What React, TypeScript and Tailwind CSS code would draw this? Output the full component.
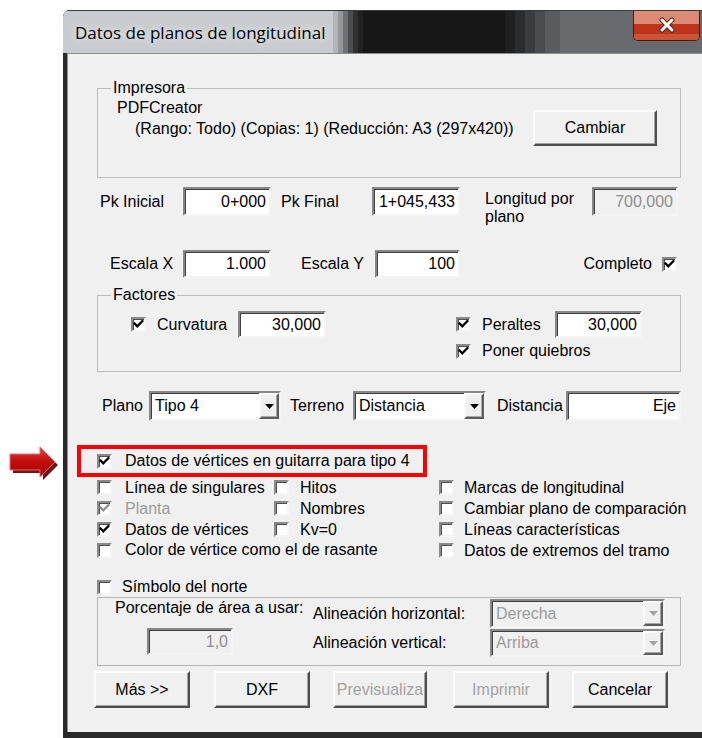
import React from "react";

type P = { children?: React.ReactNode; className?: string };

function CheckMark({ disabled }: { disabled?: boolean }) {
  return (
    <svg width="11" height="11" viewBox="0 0 11 11" className="block">
      <path
        d="M1.6 4.6 L4.3 7.4 L9.4 2.1"
        fill="none"
        stroke={disabled ? "#8f8f8f" : "#000"}
        strokeWidth="2.3"
        strokeLinecap="square"
      />
    </svg>
  );
}

function Box({ checked, disabled }: { checked?: boolean; disabled?: boolean }) {
  return (
    <span className="box-border flex h-[15px] w-[15px] shrink-0 items-center justify-center border-2 border-t-[#8a8a8a] border-l-[#8a8a8a] border-r-[#f5f5f5] border-b-[#f5f5f5] bg-white shadow-[inset_1px_1px_0_#505050]">
      {checked ? <CheckMark disabled={disabled} /> : null}
    </span>
  );
}

function Field({
  value,
  className = "",
  disabled,
}: {
  value: string;
  className?: string;
  disabled?: boolean;
}) {
  return (
    <div
      className={`box-border flex shrink-0 items-center justify-end border-2 border-t-[#878787] border-l-[#878787] border-r-[#f4f4f4] border-b-[#f4f4f4] pr-[3px] shadow-[inset_1px_1px_0_#404040] ${
        disabled ? "bg-[#f0f0f0] text-[#8d8d8d]" : "bg-white"
      } ${className}`}
    >
      {value}
    </div>
  );
}

function Select({
  value,
  className = "",
  disabled,
}: {
  value: string;
  className?: string;
  disabled?: boolean;
}) {
  return (
    <div
      className={`box-border flex shrink-0 border-2 border-t-[#878787] border-l-[#878787] border-r-[#f4f4f4] border-b-[#f4f4f4] shadow-[inset_1px_1px_0_#404040] ${
        disabled ? "bg-[#f0f0f0] text-[#9b9b9b]" : "bg-white"
      } ${className}`}
    >
      <span className="flex flex-1 items-center pl-[4px]">{value}</span>
      <span className="box-border flex w-[20px] items-center justify-center border-2 border-t-[#fafafa] border-l-[#fafafa] border-r-[#5c5c5c] border-b-[#5c5c5c] bg-[#f0f0f0] shadow-[inset_-1px_-1px_0_#a8a8a8]">
        <svg width="9" height="5" viewBox="0 0 9 5" className="block">
          <path d="M0 0 H9 L4.5 5 Z" fill={disabled ? "#a3a3a3" : "#000"} />
        </svg>
      </span>
    </div>
  );
}

function Button({ children, className = "", disabled }: P & { disabled?: boolean }) {
  return (
    <div
      className={`box-border flex shrink-0 items-center justify-center border-2 border-t-[#fcfcfc] border-l-[#fcfcfc] border-r-[#4e4e4e] border-b-[#4e4e4e] bg-[#f0f0f0] shadow-[inset_-1px_-1px_0_#a3a3a3] ${
        disabled ? "text-[#a3a3a3]" : "text-black"
      } ${className}`}
    >
      {children}
    </div>
  );
}

function Option({
  label,
  checked,
  disabled,
  gap,
}: {
  label: string;
  checked?: boolean;
  disabled?: boolean;
  gap: string;
}) {
  return (
    <div className="flex items-center">
      <Box checked={checked} disabled={disabled} />
      <span className={`${gap} whitespace-nowrap ${disabled ? "text-[#9c9c9c]" : ""}`}>{label}</span>
    </div>
  );
}

function Arrow() {
  return (
    <svg
      width="52"
      height="38"
      viewBox="0 0 52 38"
      className="absolute left-[7px] top-[445px]"
    >
      <defs>
        <linearGradient id="arrowFill" x1="0" y1="0" x2="0" y2="1">
          <stop offset="0" stopColor="#e04848" />
          <stop offset="0.45" stopColor="#c40d0d" />
          <stop offset="1" stopColor="#a80000" />
        </linearGradient>
      </defs>
      <path d="M6 12 H36 V5 L51 20 L36 35 V28 H6 Z" fill="#6d1616" />
      <path
        d="M3 9 H33 V2 L48 17 L33 32 V25 H3 Z"
        fill="url(#arrowFill)"
        stroke="#e86a6a"
        strokeWidth="1"
      />
    </svg>
  );
}

function CloseButton() {
  return (
    <div className="ml-auto mr-[6px] box-border flex h-[30px] w-[67px] shrink-0 flex-col overflow-hidden rounded-b-[5px] border border-t-0 border-[#4a1a12] shadow-[inset_0_0_0_1px_rgba(255,215,200,0.45)]">
      <div className="h-[13px] bg-[#dc8a74]" />
      <div className="h-[10px] bg-[#c0341b]" />
      <div className="flex-1 bg-[#cb5434]" />
      <svg
        width="18"
        height="16"
        viewBox="0 0 18 16"
        className="absolute ml-[24px] mt-[6px] block"
      >
        <path d="M4 3 L14 13 M14 3 L4 13" stroke="#5a2418" strokeWidth="5" strokeLinecap="round" />
        <path d="M4 3 L14 13 M14 3 L4 13" stroke="#ffffff" strokeWidth="3" strokeLinecap="round" />
      </svg>
    </div>
  );
}

function Caption() {
  return (
    <div className="flex h-[43px] shrink-0 border-t border-[#3a3a3a] bg-[#6f7275]">
      <div className="h-[42px] w-[270px] shrink-0 bg-[#c8cccf] pl-[12px] pt-[11px]">
        <span className="whitespace-nowrap font-['Open_Sans',sans-serif] text-[17px] leading-[22px] text-black [text-shadow:0_0_8px_#fff]">
          Datos de planos de longitudinal
        </span>
      </div>
      <div className="h-[42px] w-[5px] shrink-0 bg-[#b3b6b9]" />
      <div className="h-[42px] w-[5px] shrink-0 bg-[#95989b]" />
      <div className="h-[42px] w-[5px] shrink-0 bg-[#6f7174]" />
      <div className="h-[42px] w-[5px] shrink-0 bg-[#4b4d4f]" />
      <div className="h-[42px] w-[5px] shrink-0 bg-[#303132]" />
      <div className="h-[42px] w-[5px] shrink-0 bg-[#212122]" />
      <div className="h-[42px] w-[142px] shrink-0 bg-[#171717]" />
      <div className="h-[42px] w-[10px] shrink-0 bg-[#1f2021]" />
      <div className="h-[42px] w-[10px] shrink-0 bg-[#2b2c2d]" />
      <div className="h-[42px] w-[10px] shrink-0 bg-[#3a3c3e]" />
      <div className="h-[42px] w-[10px] shrink-0 bg-[#4a4c4f]" />
      <div className="h-[42px] w-[15px] shrink-0 bg-[#595c5f]" />
      <div className="relative flex h-[42px] flex-1 items-start bg-[#686b6e]">
        <CloseButton />
      </div>
    </div>
  );
}

export default function App() {
  return (
    <div className="relative h-[738px] w-[702px] overflow-hidden bg-white font-['Liberation_Sans',Arial,sans-serif] text-[16px] leading-[20px] text-black">
      <Arrow />

      {/* window frame */}
      <div className="ml-[63px] mt-[10px] flex h-[728px] w-[643px] flex-col overflow-hidden rounded-tl-[7px] bg-[#2a2a2a]">
        <Caption />

        {/* client area */}
        <div className="ml-[4px] flex h-[679px] shrink-0 flex-col border-l border-t border-[#8e8e8e] bg-[#f0f0f0]">
          {/* printer */}
          <fieldset className="ml-[29px] mt-[26px] h-[98px] w-[584px] border border-[#bdbdbd]">
            <legend className="ml-[13px] px-[2px] leading-[16px]">Impresora</legend>
            <div className="mt-px flex">
              <div className="flex-1 pl-[19px] leading-[21px]">
                <div>PDFCreator</div>
                <div className="pl-[18px] whitespace-nowrap">
                  (Rango: Todo) (Copias: 1) (Reducción: A3 (297x420))
                </div>
              </div>
              <Button className="mr-[23px] mt-[13px] h-[36px] w-[124px]">Cambiar</Button>
            </div>
          </fieldset>

          {/* chainage row */}
          <div className="ml-[29px] mt-[9px] flex h-[29px] items-start">
            <span className="flex h-[29px] w-[86px] items-center pl-[3px]">Pk Inicial</span>
            <Field className="h-[29px] w-[88px]" value="0+000" />
            <span className="flex h-[29px] w-[101px] items-center pl-[10px]">Pk Final</span>
            <Field className="h-[29px] w-[88px]" value="1+045,433" />
            <span className="mt-[3px] w-[132px] pl-[25px] leading-[18px]">
              Longitud por
              <br />
              plano
            </span>
            <Field disabled className="h-[29px] w-[86px]" value="700,000" />
          </div>

          {/* scale row */}
          <div className="ml-[29px] mt-[34px] flex h-[28px] w-[584px] items-center">
            <span className="w-[86px] pl-[13px] whitespace-nowrap">Escala X</span>
            <Field className="h-[28px] w-[88px]" value="1.000" />
            <span className="w-[104px] pl-[30px] whitespace-nowrap">Escala Y</span>
            <Field className="h-[28px] w-[85px]" value="100" />
            <span className="ml-auto mr-[10px]">Completo</span>
            <div className="mr-[4px]">
              <Box checked />
            </div>
          </div>

          {/* factors */}
          <fieldset className="ml-[29px] mt-[9px] h-[85px] w-[584px] border border-[#bdbdbd]">
            <legend className="ml-[13px] px-[2px] leading-[16px]">Factores</legend>
            <div className="mt-[8px] flex h-[27px] items-center">
              <div className="ml-[33px]">
                <Box checked />
              </div>
              <span className="ml-[11px] w-[81px]">Curvatura</span>
              <Field className="h-[27px] w-[88px]" value="30,000" />
              <div className="ml-[130px]">
                <Box checked />
              </div>
              <span className="ml-[11px] w-[73px]">Peraltes</span>
              <Field className="h-[27px] w-[87px]" value="30,000" />
            </div>
            <div className="ml-[358px] mt-[3px] flex h-[20px] items-center">
              <Box checked />
              <span className="ml-[11px]">Poner quiebros</span>
            </div>
          </fieldset>

          {/* plan type row */}
          <div className="ml-[29px] mt-[19px] flex h-[30px] items-center">
            <span className="w-[52px] pl-[5px]">Plano</span>
            <Select className="h-[30px] w-[132px]" value="Tipo 4" />
            <span className="w-[72px] pl-[9px]">Terreno</span>
            <Select className="h-[30px] w-[133px]" value="Distancia" />
            <span className="w-[80px] pl-[11px]">Distancia</span>
            <Field className="h-[30px] w-[115px]" value="Eje" />
          </div>

          {/* highlighted option */}
          <div className="ml-[9px] mt-[24px] flex h-[32px] w-[350px] items-center border-4 border-[#ff0000] pl-[16px]">
            <Box checked />
            <span className="ml-[13px] whitespace-nowrap">Datos de vértices en guitarra para tipo 4</span>
          </div>

          {/* options grid */}
          <div className="ml-[29px] grid grid-cols-[177px_165px_1fr] auto-rows-[21px]">
            <Option label="Línea de singulares" gap="ml-[13px]" />
            <Option label="Hitos" gap="ml-[11px]" />
            <Option label="Marcas de longitudinal" gap="ml-[10px]" />

            <Option label="Planta" checked disabled gap="ml-[13px]" />
            <Option label="Nombres" gap="ml-[11px]" />
            <Option label="Cambiar plano de comparación" gap="ml-[10px]" />

            <Option label="Datos de vértices" checked gap="ml-[13px]" />
            <Option label="Kv=0" gap="ml-[11px]" />
            <Option label="Líneas características" gap="ml-[10px]" />

            <div className="col-span-2">
              <Option label="Color de vértice como el de rasante" gap="ml-[13px]" />
            </div>
            <Option label="Datos de extremos del tramo" gap="ml-[10px]" />
          </div>

          {/* north symbol */}
          <div className="ml-[29px] mt-[16px] flex h-[20px] items-center">
            <Box />
            <span className="ml-[10px]">Símbolo del norte</span>
          </div>

          <div className="ml-[29px] flex h-[69px] w-[584px] border border-[#b5b5b5]">
            <div className="w-[215px]">
              <div className="pl-[17px] whitespace-nowrap">Porcentaje de área a usar:</div>
              <Field disabled className="ml-[49px] mt-[10px] h-[27px] w-[86px]" value="1,0" />
            </div>
            <div className="flex flex-col">
              <div className="mt-px flex h-[29px] items-center">
                <span className="w-[177px] whitespace-nowrap">Alineación horizontal:</span>
                <Select disabled className="h-[29px] w-[175px]" value="Derecha" />
              </div>
              <div className="mt-px flex h-[28px] items-center">
                <span className="w-[177px] whitespace-nowrap">Alineación vertical:</span>
                <Select disabled className="h-[28px] w-[175px]" value="Arriba" />
              </div>
            </div>
          </div>

          {/* command buttons */}
          <div className="ml-[26px] mt-[5px] flex h-[37px]">
            <Button className="h-[37px] w-[96px]">Más &gt;&gt;</Button>
            <Button className="ml-[24px] h-[37px] w-[96px]">DXF</Button>
            <Button disabled className="ml-[23px] h-[37px] w-[94px]">Previsualiza</Button>
            <Button disabled className="ml-[26px] h-[37px] w-[96px]">Imprimir</Button>
            <Button className="ml-[23px] h-[37px] w-[96px]">Cancelar</Button>
          </div>
        </div>
      </div>
    </div>
  );
}
